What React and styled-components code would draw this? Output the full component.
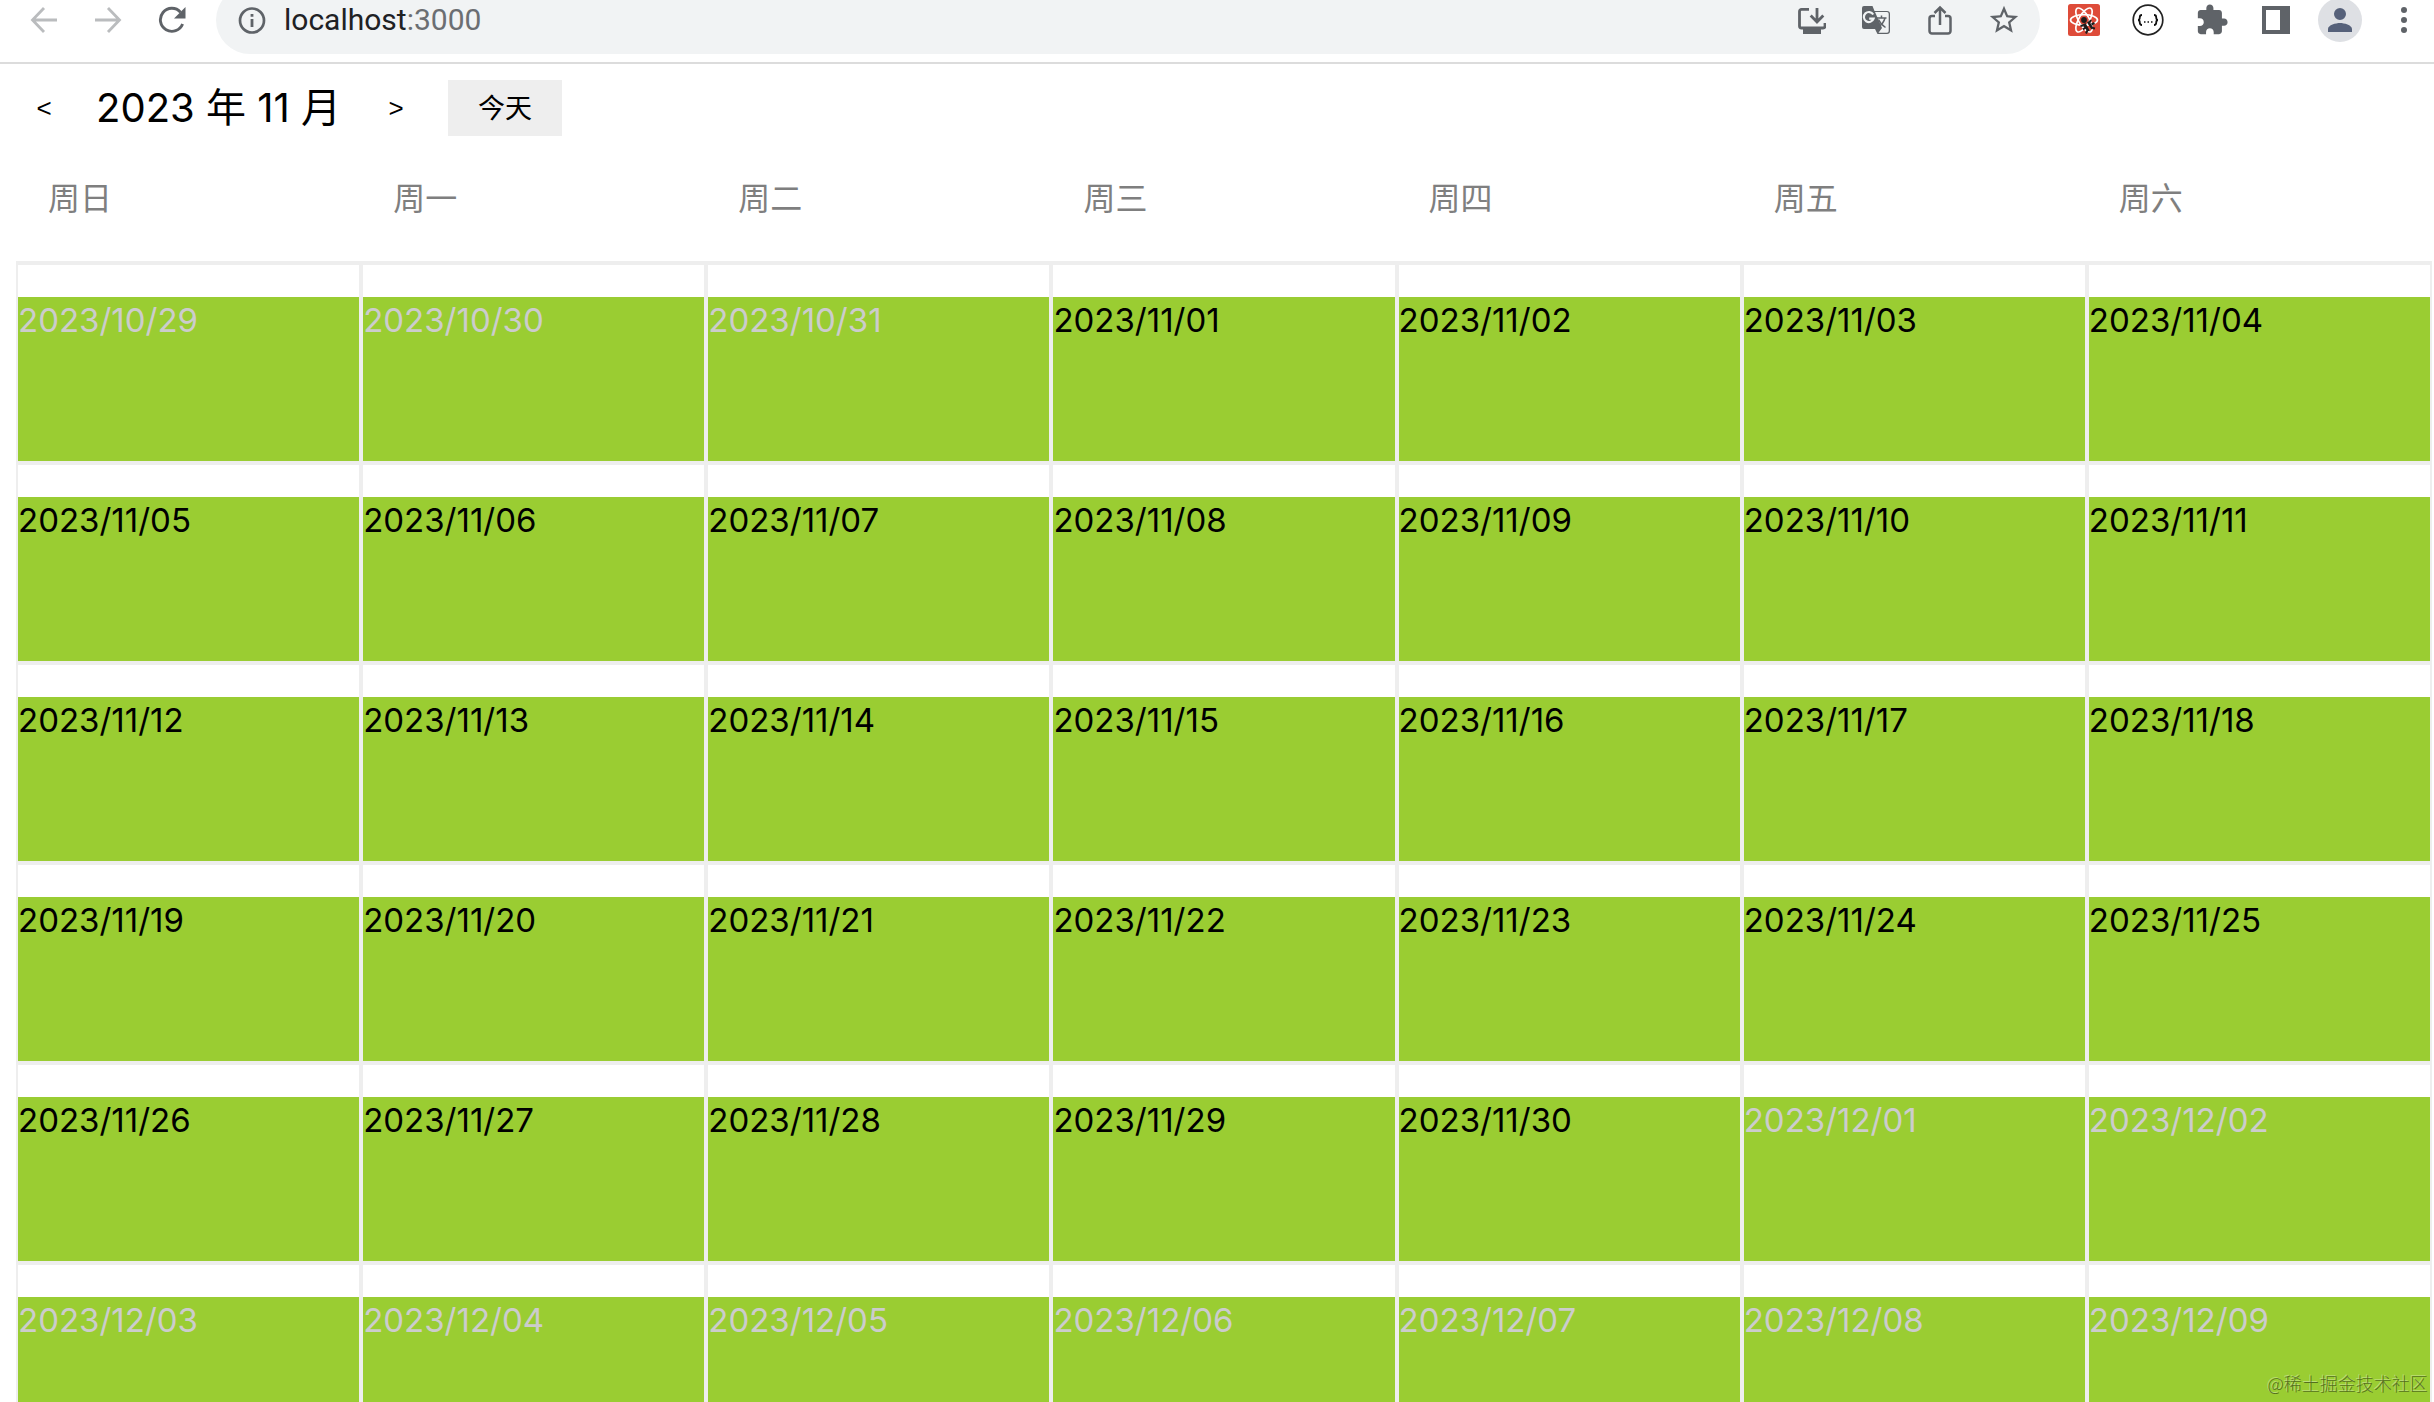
import React, { useState } from 'react';
import styled, { createGlobalStyle } from 'styled-components';

const GlobalStyle = createGlobalStyle`
  *, *::before, *::after { box-sizing: border-box; }
  body {
    margin: 0;
    background: #fff;
    color: #000;
    font-family: Inter, 'Noto Sans CJK SC', sans-serif;
  }
`;

const Page = styled.div`
  position: relative;
  height: 100vh;
  overflow: hidden;
`;

/* Browser bar */

const Toolbar = styled.header`
  display: flex;
  align-items: center;
  gap: 22px;
  margin-top: -14px;
  padding: 0 8px 8px 22px;
  border-bottom: 2px solid #dcdcdc;
`;

const IconGroup = styled.div`
  display: flex;
  align-items: center;
  gap: 20px;
`;

const IconButton = styled.button`
  display: flex;
  align-items: center;
  justify-content: center;
  width: 44px;
  height: 44px;
  padding: 0;
  border: 0;
  border-radius: 50%;
  background: ${(p) => (p.$filled ? '#dee0e4' : 'transparent')};
  color: ${(p) => p.$color || '#5f6368'};
`;

const AddressBar = styled.div`
  flex: 1;
  display: flex;
  align-items: center;
  gap: 18px;
  height: 68px;
  padding: 0 14px 0 22px;
  border-radius: 34px;
  background: #f1f3f4;
  color: #5f6368;
`;

const Address = styled.a`
  flex: 1;
  color: #202124;
  font-family: Roboto, sans-serif;
  font-size: 30px;
  line-height: 36px;
  text-decoration: none;
`;

const Port = styled.span`
  color: #6b6e72;
`;

/* Calendar */

const Calendar = styled.main`
  padding: 16px 2px 0 16px;
`;

const CalendarHeader = styled.div`
  display: flex;
  align-items: center;
  height: 56px;
`;

const Arrow = styled.button`
  width: 56px;
  height: 56px;
  padding: 0;
  border: 0;
  background: none;
  color: #000;
  font-family: 'Liberation Sans', sans-serif;
  font-size: 26px;
`;

const MonthTitle = styled.h1`
  margin: 0 27px 0 24px;
  font-size: 40px;
  font-weight: 400;
  line-height: 56px;
`;

const TodayButton = styled.button`
  height: 56px;
  margin-left: 24px;
  padding: 0 30px 4px;
  border: 0;
  background: #eee;
  color: #000;
  font-family: 'Noto Sans CJK SC', sans-serif;
  font-size: 27px;
`;

const MonthTable = styled.table`
  width: 100%;
  table-layout: fixed;
  border-spacing: 0;
`;

const Weekday = styled.th`
  padding: 40px 32px;
  border-bottom: 2px solid #eee;
  color: #7f7f7f;
  font-size: 32px;
  font-weight: 400;
  line-height: 45px;
  text-align: left;
`;

const DayCell = styled.td`
  padding: 32px 0 0;
  border: 2px solid #eee;
`;

const Day = styled.div`
  height: 164px;
  padding-top: 2px;
  background: yellowgreen;
  color: ${(p) => (p.$outside ? '#ccc' : '#000')};
  font-size: 33px;
  line-height: 42px;
`;

const Watermark = styled.div`
  position: absolute;
  right: 6px;
  bottom: 6px;
  color: rgba(60, 80, 20, 0.75);
  font-family: 'Noto Sans CJK SC', sans-serif;
  font-size: 18px;
  font-weight: 300;
  line-height: 26px;
  text-shadow: -1px -1px 0 rgba(255, 255, 255, 0.35);
`;

const Svg = ({ size = 28, box = 28, children }) => (
  <svg width={size} height={size} viewBox={`0 0 ${box} ${box}`} fill="none" stroke="currentColor" aria-hidden="true">
    {children}
  </svg>
);

const BackIcon = () => (
  <Svg><path d="M27 14H3M14 2 2.5 14 14 26" strokeWidth="2.8" /></Svg>
);
const ForwardIcon = () => (
  <Svg><path d="M1 14h24M14 2l11.500 12L14 26" strokeWidth="2.8" /></Svg>
);
const ReloadIcon = () => (
  <Svg>
    <path d="M24.600 18A11.500 11.500 0 1 1 22.500 6.200" strokeWidth="2.900" />
    <path d="M27.500 1v11.500H16z" fill="currentColor" stroke="none" />
  </Svg>
);
const InfoIcon = () => (
  <Svg>
    <circle cx="14" cy="14.500" r="12" strokeWidth="2.700" />
    <path d="M14 13v8M14 8v2.800" strokeWidth="2.800" />
  </Svg>
);
const InstallIcon = () => (
  <Svg>
    <path d="M11 3.400H3.500a2 2 0 0 0-2 2V20a2 2 0 0 0 2 2H25a2 2 0 0 0 2-2v-3" strokeWidth="2.800" />
    <path d="M19 2v13M12.700 9.500 19 16l6.300-6.500" strokeWidth="2.800" />
    <path d="M5 22h18v6H5z" fill="currentColor" stroke="none" />
  </Svg>
);
const TranslateIcon = () => (
  <Svg>
    <path d="M2 0h8.500l2 5H25a3 3 0 0 1 3 3v17a3 3 0 0 1-3 3H15.500L13 23H2a2 2 0 0 1-2-2V2a2 2 0 0 1 2-2z" fill="currentColor" stroke="none" />
    <path d="M13 6h12a1.700 1.700 0 0 1 1.700 1.700v17.300a1.700 1.700 0 0 1-1.700 1.700h-8.500l3.500-4.700z" fill="#f1f3f4" stroke="none" />
    <path d="M11.200 8.500a5 5 0 1 0 .4 4.200H7.200" stroke="#f1f3f4" strokeWidth="2.200" />
    <path d="M14.500 12h10M19.500 9.500V12M23 12c-1 4-3.500 7-7 9M16.500 13.500c1.500 3.500 4 6 7 8" strokeWidth="1.500" />
  </Svg>
);
const ShareIcon = () => (
  <Svg size={30} box={30}>
    <path d="M10 11H7a2.500 2.500 0 0 0-2.500 2.500V26A2.500 2.500 0 0 0 7 28.500h16a2.500 2.500 0 0 0 2.500-2.500V13.500A2.500 2.500 0 0 0 23 11h-3" strokeWidth="2.500" />
    <path d="M15 20V3M9.500 8 15 2.500 20.500 8" strokeWidth="2.500" />
  </Svg>
);
const StarIcon = () => (
  <Svg size={34} box={24}>
    <path d="M22 9.240l-7.190-.62L12 2 9.190 8.630 2 9.240l5.460 4.730L5.820 21 12 17.270 18.180 21l-1.630-7.030L22 9.240zM12 15.400l-3.760 2.270 1-4.280-3.320-2.880 4.380-.38L12 6.100l1.710 4.040 4.380.38-3.320 2.880 1 4.280L12 15.400z" fill="currentColor" stroke="none" />
  </Svg>
);
const ReactIcon = () => (
  <Svg size={32} box={32}>
    <rect width="32" height="32" rx="2.500" fill="#de4b39" stroke="none" />
    <g stroke="#fff" strokeWidth="1.700">
      <ellipse cx="16" cy="16" rx="13.500" ry="5.300" />
      <ellipse cx="16" cy="16" rx="13.500" ry="5.300" transform="rotate(60 16 16)" />
      <ellipse cx="16" cy="16" rx="13.500" ry="5.300" transform="rotate(120 16 16)" />
    </g>
    <g fill="#1c1c1c" stroke="#1c1c1c">
      <circle cx="16" cy="16" r="2.900" stroke="none" />
      <path d="M14.500 20.500l3-1.500 4.200 7.500-2.200 1zM19 18.500l2-1.500 4.500 7-2 1.500z" stroke="none" />
      <path d="M12.500 22l3-.8M15 25.500l2.500-2M18 29.500l1.300-3M21.500 18.500l1.500-2.500M23.500 20.500l3-1.500M24.500 24l2.500.500" strokeWidth="2" />
    </g>
  </Svg>
);
const BracesIcon = () => (
  <Svg size={32} box={32}>
    <circle cx="16" cy="16" r="14.800" stroke="#222" strokeWidth="1.700" />
    <path d="M10 11c-2 0-2.200.6-2.200 2.200S7.500 16 6 16c1.500 0 1.800 1.200 1.800 2.800S8 21 10 21M22 11c2 0 2.200.6 2.200 2.200S24.500 16 26 16c-1.500 0-1.800 1.200-1.800 2.800S24 21 22 21" stroke="#111" strokeWidth="1.800" />
    <path d="M12 18h1.500M15.500 18H17M19 18h1.500" stroke="#111" strokeWidth="1.500" />
  </Svg>
);
const PuzzleIcon = () => (
  <Svg size={34} box={24}>
    <path d="M20.500 11H19V7c0-1.100-.9-2-2-2h-4V3.500C13 2.120 11.880 1 10.500 1S8 2.120 8 3.500V5H4c-1.100 0-1.990.9-1.990 2v3.800H3.500c1.490 0 2.700 1.210 2.700 2.700s-1.210 2.700-2.700 2.700H2V20c0 1.100.9 2 2 2h3.800v-1.500c0-1.490 1.210-2.700 2.700-2.700 1.490 0 2.700 1.210 2.700 2.700V22H17c1.100 0 2-.9 2-2v-4h1.500c1.380 0 2.500-1.120 2.500-2.500S21.880 11 20.500 11z" fill="currentColor" stroke="none" />
  </Svg>
);
const SidePanelIcon = () => (
  <Svg><path d="M0 0h28v28H0zM4 4v20h14V4z" fill="currentColor" fillRule="evenodd" stroke="none" /></Svg>
);
const ProfileIcon = () => (
  <Svg size={24} box={24}>
    <path d="M12 0a6 6 0 1 1 0 12 6 6 0 0 1 0-12zM0 24v-3c0-4 8-6 12-6s12 2 12 6v3z" fill="currentColor" stroke="none" />
  </Svg>
);
const MenuIcon = () => (
  <Svg>
    <g fill="currentColor" stroke="none">
      <circle cx="14" cy="4" r="3" /><circle cx="14" cy="14" r="3" /><circle cx="14" cy="24" r="3" />
    </g>
  </Svg>
);

const addressActions = [
  ['Install app', InstallIcon],
  ['Translate', TranslateIcon],
  ['Share', ShareIcon],
  ['Bookmark', StarIcon],
];

const extensionActions = [
  ['React developer tools', ReactIcon],
  ['JSON viewer', BracesIcon],
  ['Extensions', PuzzleIcon],
  ['Side panel', SidePanelIcon],
];

const weekdays = ['周日', '周一', '周二', '周三', '周四', '周五', '周六'];

const pad = (n) => String(n).padStart(2, '0');
const format = (d) => `${d.getFullYear()}/${pad(d.getMonth() + 1)}/${pad(d.getDate())}`;

function getWeeks(month) {
  const year = month.getFullYear();
  const index = month.getMonth();
  const offset = new Date(year, index, 1).getDay();
  return Array.from({ length: 6 }, (_, week) =>
    Array.from({ length: 7 }, (_, day) => new Date(year, index, 1 - offset + week * 7 + day))
  );
}

function BrowserBar() {
  return (
    <Toolbar>
      <IconGroup>
        <IconButton $color="#babcbe" aria-label="Back"><BackIcon /></IconButton>
        <IconButton $color="#babcbe" aria-label="Forward"><ForwardIcon /></IconButton>
        <IconButton aria-label="Reload"><ReloadIcon /></IconButton>
      </IconGroup>
      <AddressBar>
        <InfoIcon />
        <Address href="#">localhost<Port>:3000</Port></Address>
        <IconGroup>
          {addressActions.map(([label, Icon]) => (
            <IconButton key={label} aria-label={label}><Icon /></IconButton>
          ))}
        </IconGroup>
      </AddressBar>
      <IconGroup>
        {extensionActions.map(([label, Icon]) => (
          <IconButton key={label} aria-label={label}><Icon /></IconButton>
        ))}
        <IconButton $filled $color="#56617a" aria-label="Profile"><ProfileIcon /></IconButton>
        <IconButton aria-label="Menu"><MenuIcon /></IconButton>
      </IconGroup>
    </Toolbar>
  );
}

export default function App() {
  const [month, setMonth] = useState(new Date(2023, 10, 1));
  const move = (n) => setMonth(new Date(month.getFullYear(), month.getMonth() + n, 1));

  return (
    <Page>
      <GlobalStyle />
      <BrowserBar />
      <Calendar>
        <CalendarHeader>
          <Arrow onClick={() => move(-1)}>&lt;</Arrow>
          <MonthTitle>{`${month.getFullYear()} 年 ${month.getMonth() + 1} 月`}</MonthTitle>
          <Arrow onClick={() => move(1)}>&gt;</Arrow>
          <TodayButton onClick={() => setMonth(new Date())}>今天</TodayButton>
        </CalendarHeader>
        <MonthTable>
          <thead>
            <tr>{weekdays.map((name) => <Weekday key={name} scope="col">{name}</Weekday>)}</tr>
          </thead>
          <tbody>
            {getWeeks(month).map((week) => (
              <tr key={format(week[0])}>
                {week.map((date) => (
                  <DayCell key={format(date)}>
                    <Day $outside={date.getMonth() !== month.getMonth()}>{format(date)}</Day>
                  </DayCell>
                ))}
              </tr>
            ))}
          </tbody>
        </MonthTable>
      </Calendar>
      <Watermark>@稀土掘金技术社区</Watermark>
    </Page>
  );
}
